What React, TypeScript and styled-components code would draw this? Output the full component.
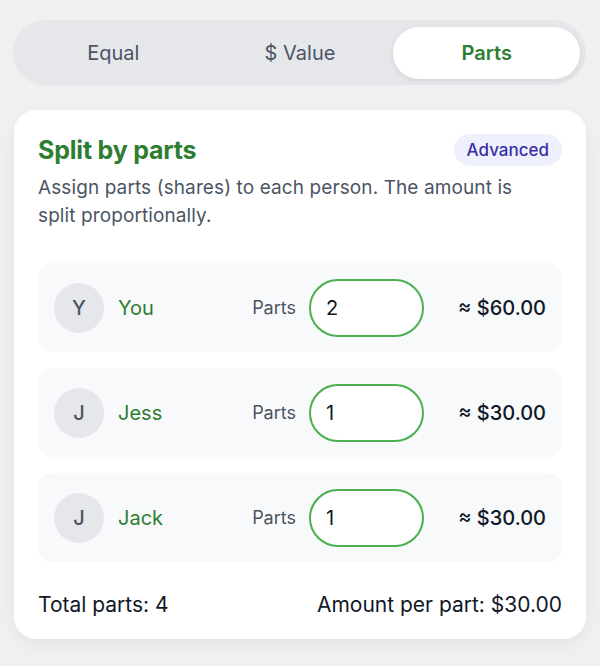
import React, { useState } from 'react'
import styled, { createGlobalStyle } from 'styled-components'

const GlobalStyle = createGlobalStyle`
  body {
    margin: 0;
    background-color: #f1efef;
    font-family: Inter, "Noto Sans", sans-serif;
    color: #111827;
  }
`;

const Page = styled.div`
  padding: 20px 14px 28px 13px;
  display: flex;
  flex-direction: column;
  gap: 25px;
`;

const Segmented = styled.div`
  display: flex;
  height: 65px;
  box-sizing: border-box;
  padding: 7px 6px 6px 7px;
  background-color: #e5e7eb;
  border-radius: 33px;
`;

const Segment = styled.button<{ $active: boolean }>`
  flex: 1;
  border: none;
  outline: none;
  border-radius: 26px;
  font-family: inherit;
  font-size: 20px;
  font-weight: ${(p) => (p.$active ? 600 : 400)};
  color: ${(p) => (p.$active ? '#2e7d32' : '#4b5563')};
  background-color: ${(p) => (p.$active ? '#ffffff' : 'transparent')};
  box-shadow: ${(p) => (p.$active ? '0 2px 6px rgba(0,0,0,0.08)' : 'none')};
  cursor: pointer;
`;

const Card = styled.div`
  margin-left: 1px;
  background-color: #ffffff;
  border-radius: 22px;
  padding: 24px 24px 22px;
  box-shadow: 0 6px 18px rgba(0, 0, 0, 0.05);
`;

const Header = styled.div`
  display: flex;
  justify-content: space-between;
  align-items: center;
`;

const Title = styled.h2`
  margin: 0;
  font-size: 25px;
  font-weight: 700;
  color: #2e7d32;
  letter-spacing: -0.2px;
`;

const Badge = styled.span`
  background-color: #eef0fd;
  color: #3730a3;
  font-size: 17px;
  font-weight: 500;
  padding: 6px 13px;
  border-radius: 17px;
`;

const Description = styled.p`
  max-width: 490px;
  margin: 8px 0 33px;
  font-size: 19px;
  line-height: 28px;
  color: #4b5563;
  letter-spacing: 0.1px;
`;

const Rows = styled.div`
  display: flex;
  flex-direction: column;
  gap: 16px;
`;

const Row = styled.div`
  display: flex;
  align-items: center;
  height: 89px;
  padding: 0 16px;
  background-color: #f8f9fb;
  border-radius: 14px;
`;

const Avatar = styled.div`
  width: 50px;
  height: 50px;
  border-radius: 50%;
  background-color: #e5e7eb;
  color: #4b5563;
  font-size: 20px;
  font-weight: 500;
  display: flex;
  align-items: center;
  justify-content: center;
  flex-shrink: 0;
`;

const Name = styled.span`
  flex: 1;
  margin-left: 14px;
  font-size: 20px;
  color: #2e7d32;
`;

const PartsLabel = styled.span`
  font-size: 18px;
  color: #4b5563;
  margin-right: 13px;
`;

const PartsInput = styled.input`
  width: 115px;
  height: 58px;
  box-sizing: border-box;
  border: 2px solid #4caf50;
  border-radius: 29px;
  padding: 0 15px;
  font-family: inherit;
  font-size: 20px;
  color: #111827;
  background-color: #ffffff;
  outline: none;
`;

const Amount = styled.span`
  width: 122px;
  text-align: right;
  font-size: 20px;
  font-weight: 500;
  color: #111827;
`;

const Footer = styled.div`
  display: flex;
  justify-content: space-between;
  margin-top: 30px;
  font-size: 21px;
  color: #111827;
`;

const people = [
  { name: 'You', parts: 2 },
  { name: 'Jess', parts: 1 },
  { name: 'Jack', parts: 1 },
]

const TOTAL = 120

export default function App() {
  const [mode, setMode] = useState('parts')
  const [parts, setParts] = useState(people.map((p) => p.parts))

  const totalParts = parts.reduce((a, b) => a + b, 0)
  const perPart = totalParts ? TOTAL / totalParts : 0

  return (
    <>
      <GlobalStyle />
      <Page>
        <Segmented>
          <Segment $active={mode === 'equal'} onClick={() => setMode('equal')}>Equal</Segment>
          <Segment $active={mode === 'value'} onClick={() => setMode('value')}>$ Value</Segment>
          <Segment $active={mode === 'parts'} onClick={() => setMode('parts')}>Parts</Segment>
        </Segmented>

        <Card>
          <Header>
            <Title>Split by parts</Title>
            <Badge>Advanced</Badge>
          </Header>
          <Description>
            Assign parts (shares) to each person. The amount is split proportionally.
          </Description>

          <Rows>
            {people.map((person, i) => (
              <Row key={person.name}>
                <Avatar>{person.name[0]}</Avatar>
                <Name>{person.name}</Name>
                <PartsLabel>Parts</PartsLabel>
                <PartsInput
                  value={parts[i]}
                  onChange={(e) => {
                    const next = [...parts]
                    next[i] = Number(e.target.value) || 0
                    setParts(next)
                  }}
                />
                <Amount>≈ ${(parts[i] * perPart).toFixed(2)}</Amount>
              </Row>
            ))}
          </Rows>

          <Footer>
            <span>Total parts: {totalParts}</span>
            <span>Amount per part: ${perPart.toFixed(2)}</span>
          </Footer>
        </Card>
      </Page>
    </>
  )
}
